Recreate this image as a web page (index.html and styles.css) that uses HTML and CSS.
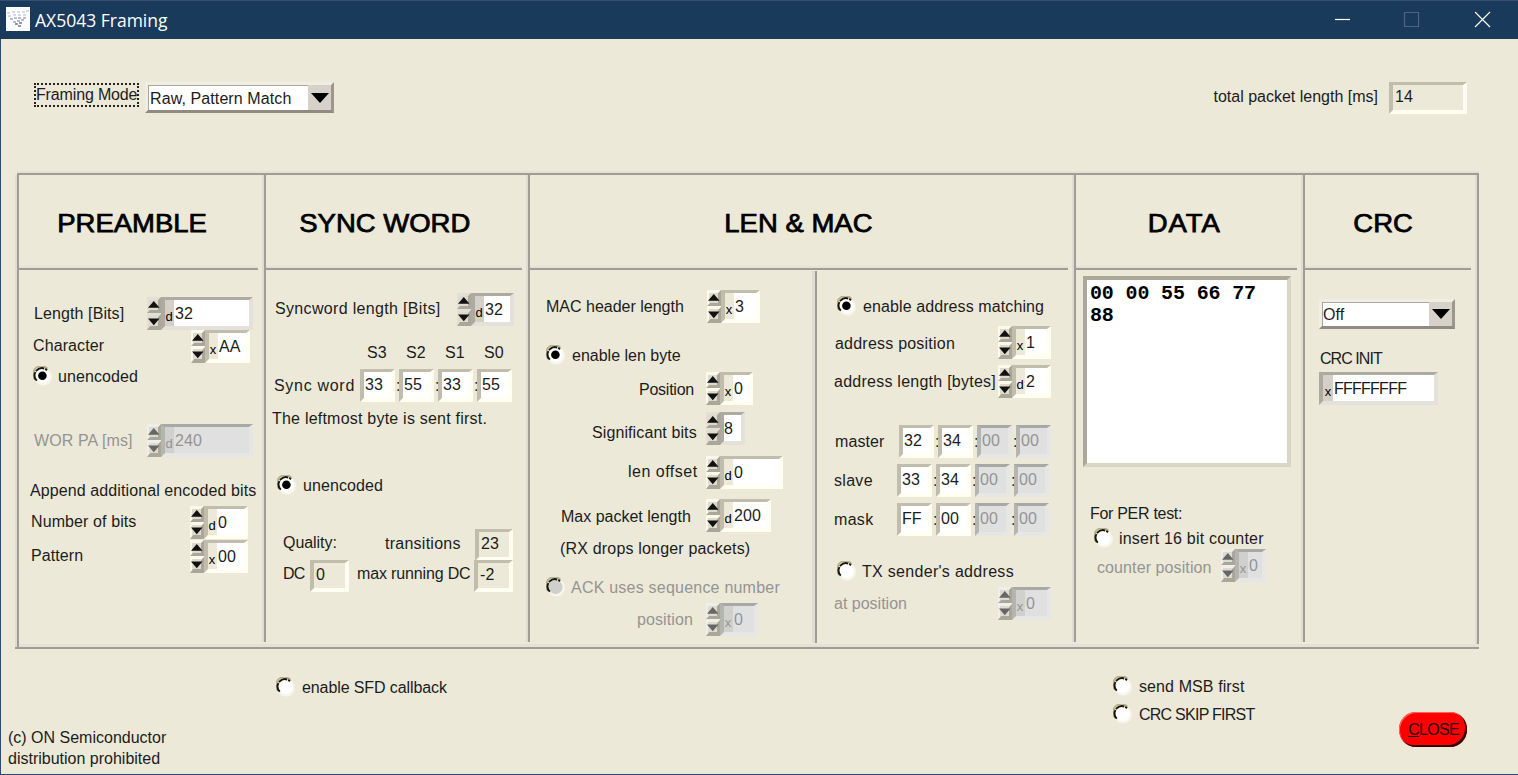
FILE: index.html
```html
<!DOCTYPE html>
<html lang="en">
<head>
<meta charset="utf-8">
<title>AX5043 Framing</title>
<link rel="stylesheet" href="styles.css">
</head>
<body>
<svg class="defs" aria-hidden="true">
  <symbol id="spin" viewBox="0 0 14 33">
    <path class="sp-light" d="M0 0H14V33H0z"/>
    <path class="sp-edge" d="M14 0V16H0L3 13H11V3zM14 17V33H0L3 29H11V20z"/>
    <path class="sp-face" d="M2 3H11V13H2zM2 19H11V29H2z"/>
    <path class="sp-tri" d="M6.8 4L12.5 10.8H1zM1 21.5H12.5L6.8 28.3z"/>
  </symbol>
  <symbol id="radio" viewBox="0 0 20 20">
    <circle class="rd-rim" cx="10.2" cy="10.8" r="8.8"/>
    <circle class="rd-face" cx="9.6" cy="10" r="7"/>
    <path class="rd-shade" d="M2.200 14A8 8 0 0 1 14.500 2.600"/>
    <path class="rd-arc" d="M3.800 14.600A7 7 0 0 1 14 4.200"/>
  </symbol>
  <symbol id="dot" viewBox="0 0 20 20"><circle cx="9.4" cy="9.8" r="4.3"/></symbol>
  <symbol id="drop" viewBox="0 0 18 10"><path d="M0 0H18L9 10z"/><path class="drop-glint" d="M11 7L16 2L9 9z"/></symbol>
</svg>

<div class="window">
  <header class="titlebar">
    <svg class="app-icon" viewBox="0 0 24 24">
      <path class="ic-pale" d="M1 6h3M6 5h3M11 5h3M16 5h3M20 4h3M2 9h3M7 8h3M12 8h3M17 8h3"/>
      <path class="ic-mid" d="M4 12h3M8 11h3M12 11h3M17 11h3M7 15h3M11 14h3M15 13h3"/>
      <path class="ic-deep" d="M9 17h3M13 16h3M12 19h3"/>
    </svg>
    <span class="app-title">AX5043 Framing</span>
    <svg class="win-buttons" viewBox="0 0 160 20">
      <path class="wb-on" d="M5 9.5H20"/>
      <path class="wb-off" d="M74.500 2.500h14v14h-14z"/>
      <path class="wb-on" d="M145 2L160 17M160 2L145 17"/>
    </svg>
  </header>

  <section class="toolbar">
    <span class="focus-label">Framing Mode</span>
    <div class="combo combo-mode"><span class="combo-text">Raw, Pattern Match</span><span class="combo-btn"><svg class="drop"><use href="#drop"/></svg></span></div>
    <span class="label total-label">total packet length [ms]</span>
    <div class="field ivory readonly total-field">14</div>
  </section>

  <main class="frame">
    <section class="panel p-preamble">
      <h2 class="head"><span>PREAMBLE</span></h2>
      <div class="body">
        <div class="row r-length"><span class="label">Length [Bits]</span><div class="spin gray"><svg class="arrows"><use href="#spin"/></svg><div class="field"><i>d</i>32</div></div></div>
        <div class="row r-char"><span class="label">Character</span><div class="spin ivory"><svg class="arrows"><use href="#spin"/></svg><div class="field"><i>x</i>AA</div></div></div>
        <div class="option o-pre"><svg class="radio"><use href="#radio"/><use href="#dot"/></svg><span>unencoded</span></div>
        <div class="row r-wor off"><span class="label">WOR PA [ms]</span><div class="spin gray"><svg class="arrows"><use href="#spin"/></svg><div class="field"><i>d</i>240</div></div></div>
        <p class="text t-append">Append additional encoded bits</p>
        <div class="row r-number"><span class="label">Number of bits</span><div class="spin ivory"><svg class="arrows"><use href="#spin"/></svg><div class="field"><i>d</i>0</div></div></div>
        <div class="row r-pattern"><span class="label">Pattern</span><div class="spin ivory"><svg class="arrows"><use href="#spin"/></svg><div class="field"><i>x</i>00</div></div></div>
      </div>
    </section>

    <section class="panel p-sync">
      <h2 class="head"><span>SYNC WORD</span></h2>
      <div class="body">
        <div class="row r-synclen"><span class="label">Syncword length [Bits]</span><div class="spin gray"><svg class="arrows"><use href="#spin"/></svg><div class="field"><i>d</i>32</div></div></div>
        <div class="byte-names"><span>S3</span><span>S2</span><span>S1</span><span>S0</span></div>
        <div class="row r-syncword"><span class="label">Sync word</span><div class="field ivory byte">33</div><b>:</b><div class="field ivory byte">55</div><b>:</b><div class="field ivory byte">33</div><b>:</b><div class="field ivory byte">55</div></div>
        <p class="text t-left">The leftmost byte is sent first.</p>
        <div class="option o-sync"><svg class="radio"><use href="#radio"/><use href="#dot"/></svg><span>unencoded</span></div>
        <div class="row r-quality"><span class="label">Quality:</span><span class="label">transitions</span><div class="field ivory readonly">23</div></div>
        <div class="row r-dc"><span class="label">DC</span><div class="field ivory readonly">0</div><span class="label">max running DC</span><div class="field ivory readonly">-2</div></div>
      </div>
    </section>

    <section class="panel p-mac">
      <h2 class="head"><span>LEN &amp; MAC</span></h2>
      <div class="split">
        <div class="body mac-left">
          <div class="row r-machdr"><span class="label">MAC header length</span><div class="spin ivory"><svg class="arrows"><use href="#spin"/></svg><div class="field"><i>x</i>3</div></div></div>
          <div class="option o-len"><svg class="radio"><use href="#radio"/><use href="#dot"/></svg><span>enable len byte</span></div>
          <div class="row r-pos"><span class="label">Position</span><div class="spin ivory"><svg class="arrows"><use href="#spin"/></svg><div class="field"><i>x</i>0</div></div></div>
          <div class="row r-sig"><span class="label">Significant bits</span><div class="spin gray"><svg class="arrows"><use href="#spin"/></svg><div class="field">8</div></div></div>
          <div class="row r-offset"><span class="label">len offset</span><div class="spin ivory"><svg class="arrows"><use href="#spin"/></svg><div class="field"><i>d</i>0</div></div></div>
          <div class="row r-max"><span class="label">Max packet length</span><div class="spin ivory"><svg class="arrows"><use href="#spin"/></svg><div class="field"><i>d</i>200</div></div></div>
          <p class="text t-rx">(RX drops longer packets)</p>
          <div class="option o-ack off"><svg class="radio"><use href="#radio"/></svg><span>ACK uses sequence number</span></div>
          <div class="row r-ackpos off"><span class="label">position</span><div class="spin pale"><svg class="arrows"><use href="#spin"/></svg><div class="field"><i>x</i>0</div></div></div>
        </div>
        <div class="body mac-right">
          <div class="option o-addr"><svg class="radio"><use href="#radio"/><use href="#dot"/></svg><span>enable address matching</span></div>
          <div class="row r-addrpos"><span class="label">address position</span><div class="spin ivory"><svg class="arrows"><use href="#spin"/></svg><div class="field"><i>x</i>1</div></div></div>
          <div class="row r-addrlen"><span class="label">address length [bytes]</span><div class="spin ivory"><svg class="arrows"><use href="#spin"/></svg><div class="field"><i>d</i>2</div></div></div>
          <div class="row r-master"><span class="label">master</span><div class="field ivory byte">32</div><b>:</b><div class="field ivory byte">34</div><b>:</b><div class="field byte dim">00</div><b>:</b><div class="field byte dim">00</div></div>
          <div class="row r-slave"><span class="label">slave</span><div class="field ivory byte">33</div><b>:</b><div class="field ivory byte">34</div><b>:</b><div class="field byte dim">00</div><b>:</b><div class="field byte dim">00</div></div>
          <div class="row r-mask"><span class="label">mask</span><div class="field ivory byte">FF</div><b>:</b><div class="field ivory byte">00</div><b>:</b><div class="field byte dim">00</div><b>:</b><div class="field byte dim">00</div></div>
          <div class="option o-tx"><svg class="radio"><use href="#radio"/></svg><span>TX sender's address</span></div>
          <div class="row r-atpos off"><span class="label">at position</span><div class="spin pale"><svg class="arrows"><use href="#spin"/></svg><div class="field"><i>x</i>0</div></div></div>
        </div>
      </div>
    </section>

    <section class="panel p-data">
      <h2 class="head"><span>DATA</span></h2>
      <div class="body">
        <div class="bytes">00 00 55 66 77 88</div>
        <p class="text t-per">For PER test:</p>
        <div class="option o-counter"><svg class="radio"><use href="#radio"/></svg><span>insert 16 bit counter</span></div>
        <div class="row r-counter off"><span class="label">counter position</span><div class="spin pale"><svg class="arrows"><use href="#spin"/></svg><div class="field"><i>x</i>0</div></div></div>
      </div>
    </section>

    <section class="panel p-crc">
      <h2 class="head"><span>CRC</span></h2>
      <div class="body">
        <div class="combo combo-crc"><span class="combo-text">Off</span><span class="combo-btn"><svg class="drop"><use href="#drop"/></svg></span></div>
        <p class="text t-init">CRC INIT</p>
        <div class="gray init-wrap"><div class="field"><i>x</i>FFFFFFFF</div></div>
      </div>
    </section>
  </main>

  <footer class="footer">
    <p class="copy">(c) ON Semiconductor<br>distribution prohibited</p>
    <div class="option o-sfd"><svg class="radio"><use href="#radio"/></svg><span>enable SFD callback</span></div>
    <div class="bit-order">
      <div class="option o-msb"><svg class="radio"><use href="#radio"/></svg><span>send MSB first</span></div>
      <div class="option o-skip"><svg class="radio"><use href="#radio"/></svg><span>CRC SKIP FIRST</span></div>
    </div>
    <button class="close" type="button"><u>C</u>LOSE</button>
  </footer>
</div>
</body>
</html>
```
FILE: styles.css
```css
* { box-sizing: border-box; }
body { margin: 0; font: 16px/20px "Liberation Sans", Arial, sans-serif; letter-spacing: 0.1px; color: #1c1c1c; }
p, h2 { margin: 0; }
svg { display: block; flex: none; }
.defs { position: absolute; width: 0; height: 0; }

.window {
  width: 1518px; height: 775px; overflow: hidden;
  background: #ece9d8;
  box-shadow: inset 1px 0 #2b4a72, inset 0 -1px #2b4a72;
}

.titlebar { height: 39px; display: flex; align-items: center; padding: 0 28px 0 6px; background: #1a3a5c; border-top: 1px solid #34506d; }
.app-icon { width: 24px; height: 24px; margin-top: -2px; background: #fff; }
.app-icon path { fill: none; stroke-width: 1.6; }
.ic-pale { stroke: #c9cede; }
.ic-mid { stroke: #9fa6c4; }
.ic-deep { stroke: #6f789d; }
.app-title { margin-left: 5px; font: 17.5px/24px "Open Sans", "Noto Sans", sans-serif; letter-spacing: 0; color: #fff; }
.win-buttons { width: 160px; height: 20px; margin-left: auto; overflow: visible; }
.win-buttons path { fill: none; stroke-width: 1.2; }
.wb-on { stroke: #fff; }
.wb-off { stroke: #4a6482; }

.toolbar { height: 132px; display: flex; align-items: flex-start; padding: 43px 51px 0 34px; }
.focus-label { width: 105px; height: 24px; margin-top: 1px; line-height: 24px; letter-spacing: -0.15px; outline: 2px dotted #222; outline-offset: -2px; padding-left: 2px; white-space: nowrap; }
.total-label { margin: 5px 11px 0 auto; letter-spacing: 0; }
.total-field { width: 78px; }

.combo { display: flex; background: #d6d2ca; border: 3px solid; border-color: #f0ede2 #9b978d #8f8b82 #f0ede2; }
.combo-text { flex: 1; background: #fff; border: 1px solid #aaa69c; border-width: 1px 0 0 1px; white-space: nowrap; padding-left: 1px; }
.combo-btn { width: 23px; display: grid; place-items: center; }
.drop { width: 18px; height: 10px; }
.drop-glint { fill: #777; }
.combo-mode { width: 189px; height: 31px; margin: 0 0 0 6px; }
.combo-mode .combo-text { line-height: 25px; }
.combo-crc { width: 136px; height: 30px; margin: 29px 0 0 14px; }
.combo-crc .combo-text { line-height: 23px; padding-left: 0; }

.frame {
  width: 1464px; height: 479px; margin-left: 15px; padding-top: 4px; display: flex;
  background:
    linear-gradient(#e5e1d9 2px, #a19d95 2px) 2px 0 / 1462px 4px no-repeat,
    linear-gradient(#e5e1d9 3px, #a19d95 3px) 0 473px / 1464px 5px no-repeat,
    linear-gradient(to right, #e0dcd4 2px, #a19d95 2px) 1460px 0 / 4px 476px no-repeat;
}
.panel { padding-left: 4px; background: linear-gradient(to right, #e0dcd4 2px, #a19d95 2px) 0 0 / 4px 467px no-repeat; }
.p-preamble { width: 247px; background-size: 4px 472px; }
.p-sync { width: 264px; }
.p-mac { width: 546px; }
.p-data { width: 229px; }
.p-crc { width: 174px; }
.head {
  height: 95px; padding-top: 32px; font-size: 25px; line-height: 32px; font-weight: 400; letter-spacing: 0; text-align: center; color: #000;
  -webkit-text-stroke: 0.75px #000;
  background: linear-gradient(#e5e1d9 2px, #a19d95 2px) 0 91px / calc(100% - 4px) 4px no-repeat;
}
.head span { display: inline-block; transform: scaleX(1.1); }
.p-preamble .head { padding-right: 17px; }
.p-sync .head { padding-right: 23px; }
.p-mac .head { padding-right: 6px; }
.p-data .head { padding-right: 8px; }
.p-data .head span { letter-spacing: 0.9px; }
.p-crc .head { padding-right: 14px; }
.split { display: flex; }
.mac-left { width: 282px; }
.mac-right { flex: 1; padding-left: 5px; background: linear-gradient(to right, #e0dcd4 3px, #a19d95 3px) 0 1px / 5px 372px no-repeat; min-height: 374px; }

.body { display: flow-root; }
.row { display: flex; align-items: center; height: 33px; }
.label, .text, .option span { white-space: pre; }
.row .label { flex: none; }
.row b { width: 4px; font-weight: 400; text-indent: 1px; letter-spacing: 0; }
.off { color: #949494; }

.field {
  display: flex; align-items: center; height: 33px; padding: 0 0 1px 1px; overflow: hidden;
  background: #fff; border: 4px solid; border-color: #aeaaa2 #e4e0da #e4e0da #aeaaa2; border-width: 3px 4px 4px 4px;
}
.ivory .field, .field.ivory { border-color: #c1bdac #fffef0 #fffef0 #c1bdac; }
.field.readonly { background: #ece9d8; height: 32px; padding-left: 2px; }
.field i { align-self: stretch; width: 10px; margin: 0 1px -1px -1px; background: #d4d0c8; font: 13px/33px "Liberation Sans", sans-serif; letter-spacing: 0; color: #000; text-align: center; }
.ivory .field i { background: #ece9d8; }
.byte { width: 35px; padding-left: 1px; }
.spin { display: flex; }
.spin .field { flex: 1; padding: 2px 0 0 0; }
.spin .field i { margin-top: -2px; margin-bottom: 0; }
.arrows { width: 14px; height: 33px; }
.sp-light { fill: var(--light, #fbf9ec); }
.sp-edge { fill: #aaa699; }
.sp-face { fill: #dedacc; }
.sp-tri { fill: var(--tri, #111); }
.gray { --light: #e3dfd6; }
.off .field, .field.dim { background: #e0e0e0; border-color: #a8a8a4 #e6e6e4 #e6e6e4 #b4b4b0; color: #949494; }
.off .field i { background: #d0d0cc; color: #949494; }
.off .arrows { --tri: #666; --light: #eeeeec; }

.option { display: flex; align-items: center; height: 20px; }
.option span { padding-top: 2px; }
.radio { width: 20px; height: 20px; }
.rd-rim { fill: #f8f6ec; }
.rd-face { fill: var(--face, #fff); }
.rd-shade { fill: none; stroke: #b5af88; stroke-width: 1.6; }
.rd-arc { fill: none; stroke: #15150c; stroke-width: 1.9; stroke-dasharray: 9 1; }
.o-ack { --face: #cfcfcb; }
.o-pre { margin: 3px 0 0 14px; gap: 5px; }

.r-length { margin: 27px 0 0 15px; }
.r-length .label, .r-wor .label { width: 113px; }
.r-length .spin, .r-wor .spin { width: 106px; }
.r-char { margin-left: 14px; }
.r-char .label { width: 158px; padding-bottom: 2px; }
.r-char .spin { width: 59px; }
.r-wor { margin: 38px 0 0 15px; }
.t-append { margin: 24px 0 0 11px; }
.r-number { margin: 5px 0 0 12px; }
.r-pattern { margin: 1px 0 0 12px; }
.r-number .label, .r-pattern .label { width: 159px; padding-bottom: 2px; }
.r-number .spin, .r-pattern .spin { width: 58px; }

.r-synclen { margin: 23px 0 0 9px; }
.r-synclen .label { width: 182px; padding-bottom: 2px; letter-spacing: 0.33px; }
.r-synclen .spin { width: 57px; }
.byte-names { display: flex; margin: 17px 0 0 101px; }
.byte-names span { width: 39px; }
.r-syncword { margin: 6px 0 0 8px; }
.r-syncword .label { width: 86px; letter-spacing: 0.7px; }
.t-left { margin: 7px 0 0 6px; letter-spacing: 0.22px; }
.o-sync { margin: 46px 0 0 11px; gap: 6px; }
.r-quality { margin: 34px 0 0 17px; height: 31px; }
.r-quality .label { width: 102px; padding-bottom: 3px; letter-spacing: -0.05px; }
.r-quality .label + .label { width: 90px; padding-bottom: 1px; letter-spacing: 0.25px; }
.r-quality .field { width: 38px; }
.r-dc { margin: 0 0 0 17px; height: 31px; }
.r-dc .label { width: 27px; padding-bottom: 3px; letter-spacing: -0.8px; }
.r-dc .field { width: 39px; }
.r-dc .field + .label { width: 117px; margin-left: 8px; letter-spacing: -0.15px; }

.r-machdr { margin: 20px 0 0 16px; }
.r-machdr .label { width: 161px; letter-spacing: 0; }
.r-machdr .spin { width: 53px; }
.o-len { margin: 22px 0 0 16px; gap: 6px; letter-spacing: 0; }
.r-pos { margin: 7px 0 0 109px; }
.r-pos .label { width: 67px; padding-top: 3px; letter-spacing: -0.25px; }
.r-pos .spin { width: 47px; }
.r-sig { margin: 7px 0 0 62px; }
.r-sig .label { width: 114px; padding-top: 8px; }
.r-sig .spin { width: 39px; }
.r-offset { margin: 11px 0 0 98px; }
.r-offset .label { width: 78px; padding-bottom: 2px; letter-spacing: 0.5px; }
.r-offset .spin { width: 77px; }
.r-max { margin: 10px 0 0 31px; }
.r-max .label { width: 145px; padding-top: 2px; letter-spacing: 0; }
.r-max .spin { width: 65px; }
.t-rx { margin: 7px 0 0 30px; letter-spacing: 0.18px; }
.o-ack { margin: 18px 0 0 16px; gap: 5px; letter-spacing: 0.22px; }
.r-ackpos { margin: 6px 0 0 107px; }
.r-ackpos .label { width: 69px; padding-top: 1px; }
.r-ackpos .spin { width: 52px; }

.o-addr { margin: 26px 0 0 20px; gap: 6px; }
.r-addrpos { margin: 10px 0 0 18px; }
.r-addrpos .label { width: 163px; padding-top: 2px; letter-spacing: 0.22px; }
.r-addrlen { margin: 6px 0 0 17px; }
.r-addrlen .label { width: 164px; letter-spacing: 0.25px; }
.r-addrpos .spin, .r-addrlen .spin, .r-atpos .spin { width: 53px; }
.r-master { margin: 27px 0 0 18px; }
.r-master .label { width: 64px; }
.r-slave, .r-mask { margin: 6px 0 0 17px; }
.r-slave .label, .r-mask .label { width: 63px; letter-spacing: 0.3px; }
.o-tx { margin: 25px 0 0 20px; gap: 5px; letter-spacing: 0.3px; }
.r-atpos { margin: 6px 0 0 17px; }
.r-atpos .label { width: 164px; letter-spacing: 0; }

.bytes {
  width: 208px; height: 191px; margin: 6px 0 0 7px; padding: 3px 0 0 3px; background: #fff;
  border: 4px solid; border-color: #aca899 #dad6c5 #dad6c5 #aca899;
  font: bold 20px/22px "Liberation Mono", monospace; letter-spacing: -0.15px; color: #000;
}
.t-per { margin: 37px 0 0 14px; letter-spacing: -0.3px; }
.o-counter { margin: 4px 0 0 18px; gap: 5px; letter-spacing: 0.2px; }
.r-counter { margin: 1px 0 0 21px; }
.r-counter .label { width: 124px; padding-top: 4px; }
.r-counter .spin { width: 45px; }

.t-init { margin: 20px 0 0 15px; letter-spacing: -0.95px; }
.init-wrap { width: 119px; margin: 3px 0 0 14px; letter-spacing: -0.75px; }
.init-wrap .field { padding-top: 2px; }
.init-wrap .field i { margin-top: -2px; }

.footer { display: flex; align-items: flex-start; height: 125px; padding-left: 8px; }
.copy { width: 268px; margin-top: 77px; line-height: 21px; letter-spacing: 0; }
.o-sfd { width: 837px; margin-top: 27px; gap: 6px; letter-spacing: -0.1px; }
.bit-order { width: 286px; margin-top: 26px; }
.bit-order .option { gap: 6px; }
.o-skip { margin-top: 8px; letter-spacing: -0.75px; }
.close {
  width: 68px; height: 35px; margin-top: 62px; padding: 0 0 0 1px;
  font: 16px/20px "Liberation Sans", Arial, sans-serif; letter-spacing: -0.7px; color: #210000; background: #f00;
  border: 0; border-radius: 17px; box-shadow: inset -2px -2px 0 #300, inset 1px 1px #ff6060;
}
```
